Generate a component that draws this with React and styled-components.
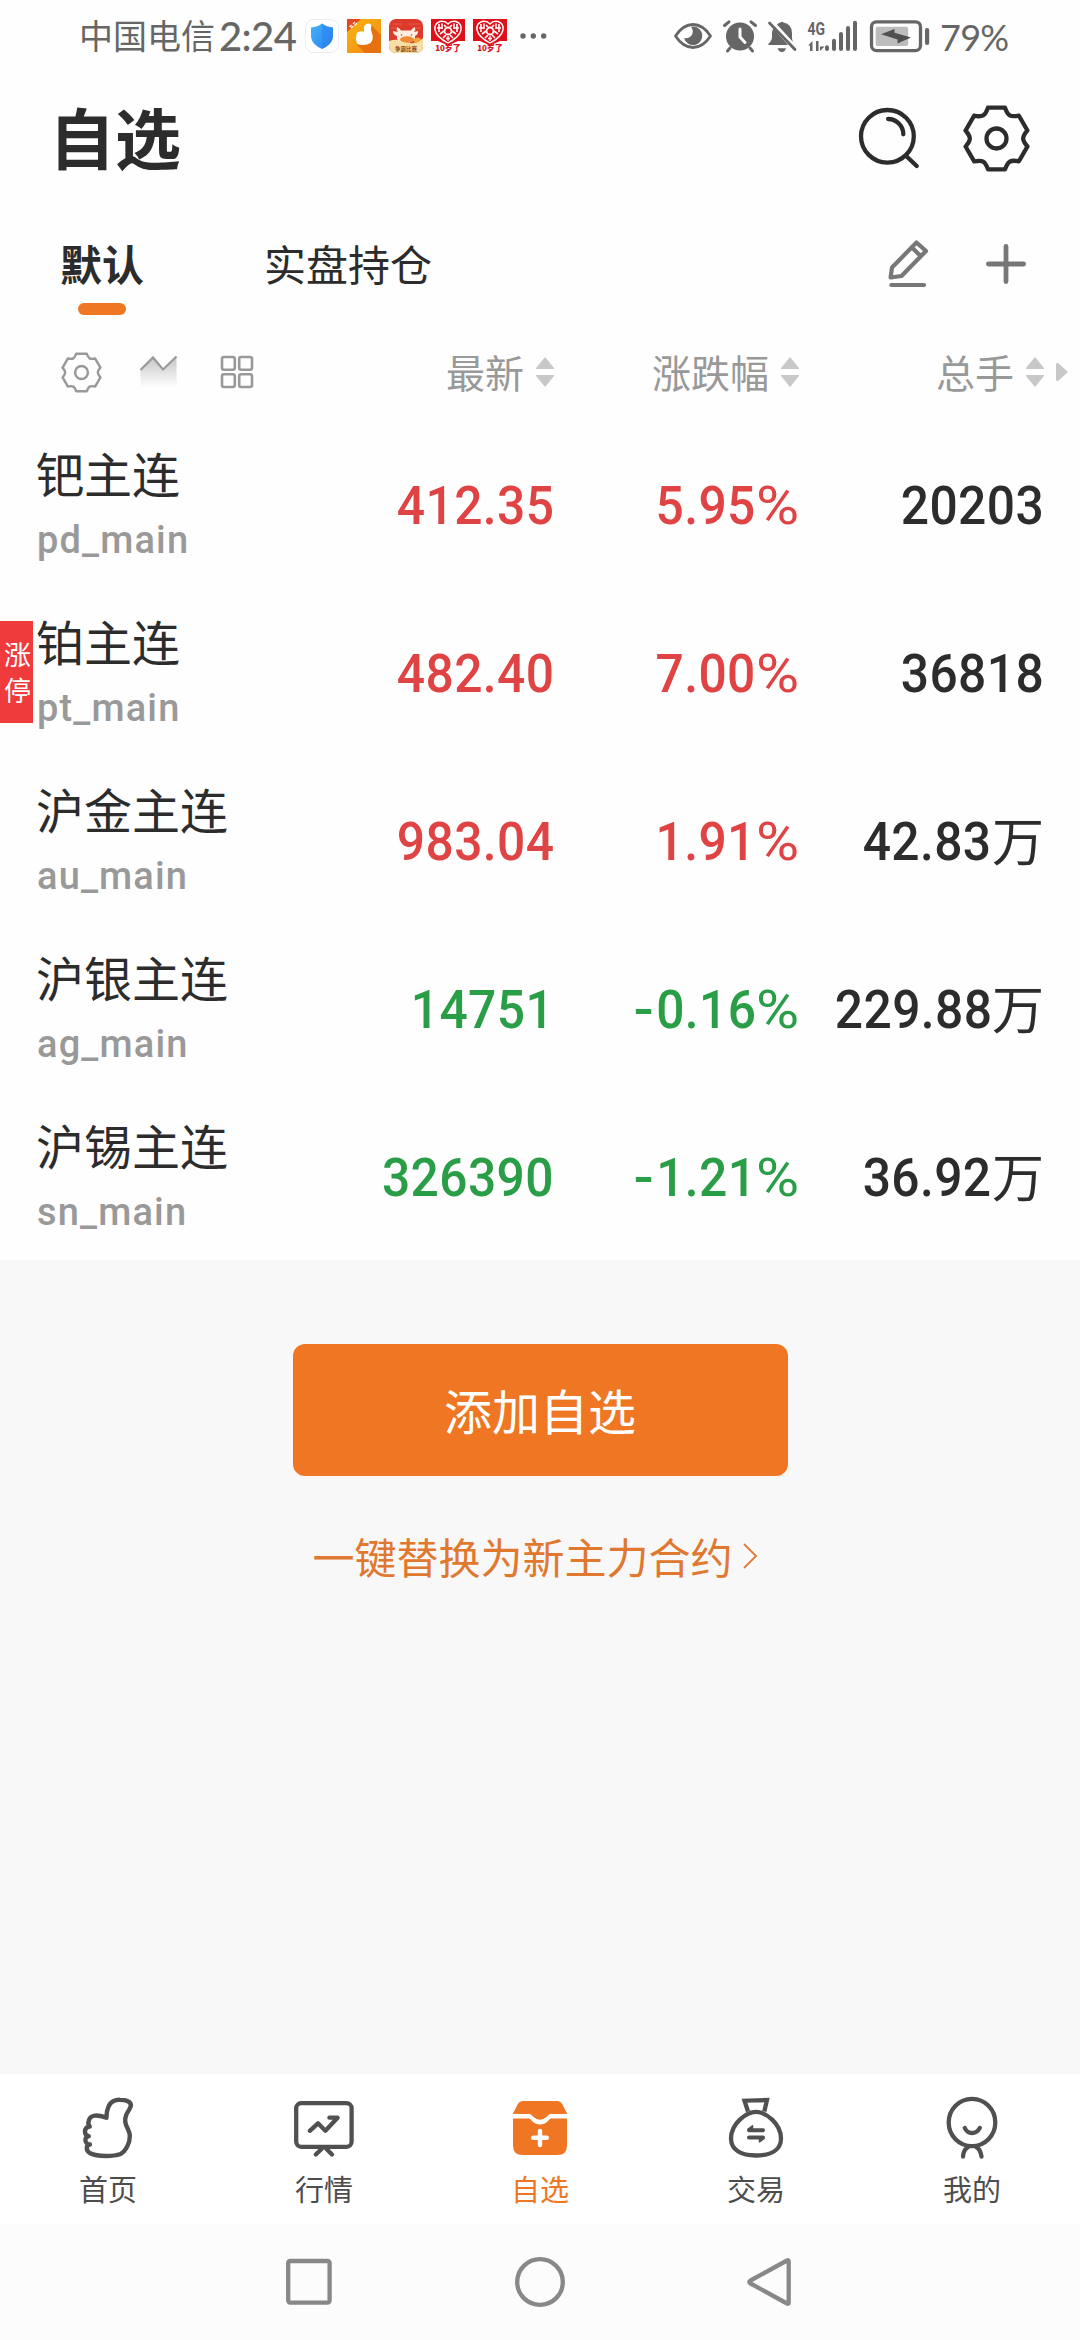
import React from 'react'
import styled, { createGlobalStyle } from 'styled-components'

const quotes = [
    { name: '钯主连', code: 'pd_main', price: '412.35', change: '5.95', volume: '20203', up: true },
    { name: '铂主连', code: 'pt_main', price: '482.40', change: '7.00', volume: '36818', up: true, limit: true },
    { name: '沪金主连', code: 'au_main', price: '983.04', change: '1.91', volume: '42.83', unit: '万', up: true },
    { name: '沪银主连', code: 'ag_main', price: '14751', change: '-0.16', volume: '229.88', unit: '万' },
    { name: '沪锡主连', code: 'sn_main', price: '326390', change: '-1.21', volume: '36.92', unit: '万' },
]

const tabs = [
    { label: '首页', icon: HomeIcon },
    { label: '行情', icon: MarketIcon },
    { label: '自选', icon: WatchIcon, active: true },
    { label: '交易', icon: TradeIcon },
    { label: '我的', icon: MineIcon },
]

// one tooth of the gear, repeated six times around the centre
function gearPath() {
    const rot = (x, y, k) => {
        const a = (k * Math.PI) / 3
        return `${(x * Math.cos(a) - y * Math.sin(a)).toFixed(2)},${(x * Math.sin(a) + y * Math.cos(a)).toFixed(2)}`
    }
    let d = ''
    for (let k = 0; k < 6; k++) {
        d += `${k === 0 ? 'M' : 'L'}${rot(-8.5, -30.8, k)} L${rot(8.5, -30.8, k)} `
        d += `C${rot(11.5, -22.5, k)} ${rot(13.7, -21.2, k)} ${rot(22.4, -22.8, k)} `
    }
    return d + 'Z'
}

function GearIcon({ size, color, stroke, hole = 10 }) {
    return (
        <svg width={size} height={size} viewBox="-33.5 -33.5 67 67" fill="none" stroke={color} strokeWidth={stroke} strokeLinejoin="round">
            <path d={gearPath()} />
            <circle r={hole} />
        </svg>
    )
}

function HomeIcon() {
    return (
        <svg width="60" height="68" fill="none" stroke="#505050" strokeWidth="4.4" strokeLinejoin="round">
            <path d="M28.4 23.7C28.4 19 29 16 30.5 12.7C31.8 9.5 33.5 8 35.6 7C37.6 6 39.5 5.6 41.8 5.7C45 5.7 47.5 6 49.4 7C52.4 8.3 53.5 10 52.6 12.5C52 14 51.4 15.5 50.5 16.7C48.6 19.3 47.5 21.5 47.3 24.3C47 26.6 47.2 29 48 31C49.8 34.8 51.8 38 51.8 42C51.8 46 51 49.3 49.4 52C47.6 55.5 45.6 58.5 42.5 60C38 61.7 33 62 28 62C22 62 16.5 61.6 12.2 59.3C9.8 58 8.6 55.6 8.8 53.3C9 52 9.8 50.7 12 50.5C9 50.6 7.4 48.2 7.4 46C7.4 44 8.6 42.3 10.8 42.3C8.6 42 7 40.2 7 37.8C7 35 8.6 32.8 11.8 32.5C10.2 31 10 28.6 10.8 26.6C11.6 23.4 13.6 22 17 21.6C21 21.3 25 22.6 28.4 23.7Z" />
        </svg>
    )
}

function MarketIcon() {
    return (
        <svg width="60" height="68" fill="none" stroke="#505050" strokeWidth="4.3" strokeLinecap="round" strokeLinejoin="round">
            <rect x="2.2" y="9.2" width="55.4" height="43.6" rx="5" />
            <path d="M15.8 36.8L24 29.3L31.4 36.8L43.6 23.7H35.4" />
            <path d="M28 54.5L21.8 60.5M32 54.5L38 60.5" />
        </svg>
    )
}

function WatchIcon() {
    return (
        <svg width="60" height="68" fill="#ef7622">
            <path d="M13 7H47Q50.5 7 52.5 10.5L57.2 20H42C39.5 20 38.5 20.500 37 22.500Q34 25.700 30 25.700T23 22.500C21.500 20.500 20.500 20 18 20H2.800L7.500 10.500Q9.500 7 13 7Z" />
            <path d="M3 24.600H18C20 24.600 20.500 25 21.500 26.500Q25 30.500 30 30.500T38.500 26.500C39.500 25 40 24.600 42 24.600H57V51.500Q57 61 47.500 61H12.500Q3 61 3 51.500Z" />
            <path d="M23.200 43.800H36.800M30 37V51" stroke="#fff" strokeWidth="4.400" strokeLinecap="round" />
        </svg>
    )
}

function TradeIcon() {
    return (
        <svg width="60" height="68" fill="none" stroke="#505050" strokeWidth="4.3">
            <path d="M22 17.500L18.500 6.700L41 6L38.300 17.500" />
            <path d="M30 17.800C39 17.800 55 29 55 44.500C55 56 45 61.500 30 61.500S5 56 5 44.500C5 29 21 17.800 30 17.800Z" />
            <path d="M23 36.200H37M23 43.400H37" strokeLinecap="round" strokeWidth="4" />
            <path d="M22.200 35L26.500 31.800V36ZM37.800 44.600L33.500 47.800V43.400Z" fill="#505050" strokeWidth="1.500" strokeLinejoin="round" />
        </svg>
    )
}

function MineIcon() {
    return (
        <svg width="60" height="68" fill="none" stroke="#505050" strokeWidth="4.3" strokeLinecap="round">
            <ellipse cx="30" cy="28.500" rx="23.300" ry="23.600" />
            <path d="M22.800 34Q25 39 30 39T37.800 34" />
            <path d="M21 62.500Q21.500 55 27 52.500M39.500 62.500Q38.500 55 33.500 52.500" />
        </svg>
    )
}

function SortArrows() {
    return (
        <svg width="18" height="32" fill="#c8c8c8">
            <path d="M9 1L18 12V13H0V12ZM0 19H18V20L9 31L0 20Z" />
        </svg>
    )
}

function ShieldApp() {
    return (
        <svg width="34" height="34">
            <defs>
                <linearGradient id="shield" x1="0" y1="0" x2="1" y2="1">
                    <stop offset="0" stopColor="#43b5fb" />
                    <stop offset="1" stopColor="#2b7df0" />
                </linearGradient>
            </defs>
            <rect x="0.5" y="0.5" width="33" height="33" rx="8" fill="#fff" stroke="#ececec" />
            <path d="M17 4.500Q21 8 28 8.500V18Q27 25.500 17 30Q7 25.500 6 18V8.500Q13 8 17 4.500Z" fill="url(#shield)" />
            <path d="M17 4.500Q21 8 28 8.500V18Q27 25.500 17 30Z" fill="#2b83ef" opacity="0.55" />
        </svg>
    )
}

function ThumbApp() {
    return (
        <svg width="34" height="34">
            <defs>
                <linearGradient id="thumb" x1="0" y1="0" x2="1" y2="1">
                    <stop offset="0" stopColor="#fbb40c" />
                    <stop offset="1" stopColor="#f08a1a" />
                </linearGradient>
            </defs>
            <rect width="34" height="34" fill="url(#thumb)" />
            <path d="M24 6L34 16V34H18L10 26Z" fill="#e5710f" />
            <path d="M0 0H14L0 13Z" fill="#e8461e" />
            <path d="M2.500 8L4.500 6M4 9L6 7M6 5L8 3M7.500 6.500L10 4" stroke="#fff" strokeWidth="1.200" />
            <path d="M17 12.500Q16 5 21 4.500Q25.500 4.500 24 9Q23.500 11 25 14Q27 20 23.500 24Q20 26.500 14 26Q9.500 25.500 9.500 22.500Q8 20.500 9.200 18Q9 13 12.500 12.500Z" fill="#fff" />
        </svg>
    )
}

function BullApp() {
    return (
        <svg width="34" height="34">
            <defs>
                <clipPath id="bullClip"><rect width="34" height="34" rx="7" /></clipPath>
            </defs>
            <g clipPath="url(#bullClip)">
                <rect width="34" height="34" fill="#dd3a2c" />
                <path d="M4 5H13M20 5H31M2 9H8M27 9H32" stroke="#e5503f" strokeWidth="1.500" />
                <path d="M0 22Q8 19 17 23T34 19V34H0Z" fill="#f6dfa4" />
                <path d="M9 13Q7 11 8 8Q11 9 12 11.500H22Q23 9 26 8Q27 11 25 13L29 12Q29 16 26 17V20Q23 24 17 24T8 20V17Q4 16 4 12Z" fill="#fdeee0" />
                <ellipse cx="18" cy="20.500" rx="7" ry="3.200" fill="#f08a35" />
                <path d="M12.500 15.500V16.500M22.500 15.500V16.500" stroke="#6b2a14" strokeWidth="1.300" />
                <path d="M25 20Q29 17 32 20Q30 24 25 24Z" fill="#f4a23c" />
                <text x="6" y="31.500" fontSize="5.500" fontWeight="700" fill="#8e4318">争霸比赛</text>
            </g>
        </svg>
    )
}

function HeartApp() {
    return (
        <svg width="34" height="34">
            <path d="M0 0H34V22H27L17 26.500L7 22H0Z" fill="#e0101a" />
            <path d="M17 5Q20 1.500 25 2.500Q31 4.500 30 11Q28.500 18 17 24Q5.500 18 4 11Q3 4.500 9 2.500Q14 1.500 17 5Z" fill="none" stroke="#fff" strokeWidth="1.400" />
            <path d="M8 5V13M11 4.500V10M6 9H11M26 5V13M23 4.500V10M28 9H23M9 15L13 12M25 15L21 12M13 6L15 8M21 6L19 8M12 19L15 16M22 19L19 16" stroke="#fff" strokeWidth="1.600" fill="none" />
            <circle cx="17" cy="12" r="3.500" fill="none" stroke="#fff" strokeWidth="1.800" />
            <path d="M17 17V22M15 19.500H19" stroke="#fff" strokeWidth="1.300" />
            <text x="17" y="32.300" textAnchor="middle" fontSize="8" fontWeight="900" fill="#d8101a">10岁了</text>
        </svg>
    )
}

function StatusIcons() {
    return (
        <svg width="260" height="36" viewBox="670 18 260 36" fill="#666">
            {/* eye */}
            <path d="M675.500 36Q683 24.500 693 24.500T710.500 36Q703 47.500 693 47.500T675.500 36Z" fill="none" stroke="#666" strokeWidth="2.800" strokeLinejoin="round" />
            <path d="M693 26.500A9.300 9.300 0 1 1 684 38A7 7 0 0 0 692.500 33.500A7 7 0 0 0 691 27Z" />
            {/* alarm */}
            <circle cx="740" cy="36.500" r="14" />
            <path d="M730 48L727.500 51M750 48L752.500 51M724.500 25.500L729 21.800M755.500 25.500L751 21.800" stroke="#666" strokeWidth="3" strokeLinecap="round" />
            <path d="M740 29V37L745 42.500" stroke="#fff" strokeWidth="3" strokeLinecap="round" fill="none" />
            {/* muted bell */}
            <path d="M773.500 28.500L788 45H768.500V43.500Q772 41 772 36.500V32.500Q772.300 30 773.500 28.500ZM777 24.500Q779 22.800 780.500 22.600Q782 20.700 783.500 22.600Q792 24.500 792 33V37.500Q792 40 793 42ZM777.500 48.300H786Q785 52 782 52Q778.800 52 777.500 48.300Z" />
            <path d="M769.500 23L795 49.500" stroke="#666" strokeWidth="2.800" strokeLinecap="round" />
            {/* mobile signal */}
            <text x="807.500" y="35" fontSize="18.500" fontWeight="700" fontFamily="Roboto" textLength="17.500" lengthAdjust="spacingAndGlyphs">4G</text>
            <path d="M812.500 41V51H810V45.500H808ZM816 41H818.500V51H816ZM820 41V51L824.500 46.500H820Z" />
            <path d="M827 47.200V49M834 40.700V49M841 34V49M848 28V49M855 22.700V49" stroke="#666" strokeWidth="4" strokeLinecap="round" />
            {/* battery */}
            <rect x="871.500" y="21.800" width="49" height="28.800" rx="5" fill="none" stroke="#666" strokeWidth="3.300" />
            <rect x="875.700" y="26.700" width="32.500" height="19.300" rx="2" fill="#bdbdbd" />
            <path d="M881 34.300L894.500 29V32.700L911 37.500L897.500 43.500V39.500Z" fill="#505050" />
            <rect x="925" y="28" width="4.200" height="17" rx="2" />
        </svg>
    )
}

function QuoteRow({ item }) {
    const trend = item.up ? '#e04343' : '#2a9d47'
    const negative = item.change.startsWith('-')

    return (
        <Row>
            {item.limit && <LimitBadge>涨<br />停</LimitBadge>}
            <div>
                <Name>{item.name}</Name>
                <Code>{item.code}</Code>
            </div>
            <Figure $color={trend}><Digits>{item.price}</Digits></Figure>
            <Figure $color={trend}>
                <Digits>{negative && <Minus>-</Minus>}{item.change.replace('-', '')}</Digits>
                <Percent>%</Percent>
            </Figure>
            <Figure $color="#2c2c2c">
                <Digits>{item.volume}</Digits>
                {item.unit && <Unit>{item.unit}</Unit>}
            </Figure>
        </Row>
    )
}

function App() {
    return (
        <Screen>
            <GlobalStyle />
            <StatusBar>
                <Carrier>中国电信</Carrier>
                <Clock>2:24</Clock>
                <AppIcons>
                    <ShieldApp />
                    <ThumbApp />
                    <BullApp />
                    <HeartApp />
                    <HeartApp />
                    <svg width="32" height="34" fill="#666">
                        <circle cx="8" cy="17" r="2.700" />
                        <circle cx="18.300" cy="17" r="2.700" />
                        <circle cx="28.700" cy="17" r="2.700" />
                    </svg>
                </AppIcons>
                <StatusRight>
                    <StatusIcons />
                    <Battery>79%</Battery>
                </StatusRight>
            </StatusBar>

            <TitleBar>
                <Title>自选</Title>
                <TitleActions>
                    <svg width="64" height="64" fill="none" stroke="#2c2c2c" strokeWidth="4.300" strokeLinecap="round">
                        <ellipse cx="30.400" cy="30.300" rx="26.400" ry="26.300" />
                        <path d="M31.100 13A15.300 15.300 0 0 1 46.300 28.300M49.400 50.300L59.700 60" />
                    </svg>
                    <GearIcon size={67} color="#2c2c2c" stroke={4.3} />
                </TitleActions>
            </TitleBar>

            <GroupBar>
                <Group $active>默认</Group>
                <Group>实盘持仓</Group>
                <GroupActions>
                    <svg width="42" height="50" fill="none" stroke="#777" strokeWidth="4.200" strokeLinecap="round" strokeLinejoin="round">
                        <path d="M3.600 38.500L5 28.500L29.500 3.500L39 12L14.500 37Z M25 8.500L33.500 17" />
                        <path d="M4.300 46H37" />
                    </svg>
                    <svg width="42" height="42" stroke="#777" strokeWidth="4.800" strokeLinecap="round">
                        <path d="M3.400 21H38.600M21 3.400V38.600" />
                    </svg>
                </GroupActions>
            </GroupBar>

            <ColumnBar>
                <ViewModes>
                    <GearIcon size={41} color="#999" stroke={4} hole={10.5} />
                    <svg width="38" height="34">
                        <defs>
                            <linearGradient id="area" x1="0" y1="0" x2="0" y2="1">
                                <stop offset="0" stopColor="#c4c4c4" />
                                <stop offset="1" stopColor="#ffffff" />
                            </linearGradient>
                        </defs>
                        <path d="M0.500 14L13 2L23 14L36.500 1V33H0.500Z" fill="url(#area)" />
                        <path d="M0.500 15L13 2.500L23 14.500L36.500 1.500" fill="none" stroke="#999" strokeWidth="2.200" />
                    </svg>
                    <svg width="34" height="34" fill="none" stroke="#999" strokeWidth="2.600">
                        <rect x="2" y="2" width="12.800" height="12.800" rx="2" />
                        <rect x="19.200" y="2" width="12.800" height="12.800" rx="2" />
                        <rect x="2" y="19.200" width="12.800" height="12.800" rx="2" />
                        <rect x="19.200" y="19.200" width="12.800" height="12.800" rx="2" />
                    </svg>
                </ViewModes>
                <Column><span>最新</span><SortArrows /></Column>
                <Column><span>涨跌幅</span><SortArrows /></Column>
                <Column><span>总手</span><SortArrows /></Column>
                <svg width="12" height="20" fill="#c8c8c8">
                    <path d="M0 2.500Q0 0.500 2 1L12 10L2 19Q0 19.500 0 17.500Z" />
                </svg>
            </ColumnBar>

            {quotes.map(q => <QuoteRow key={q.code} item={q} />)}

            <Footer>
                <AddButton>添加自选</AddButton>
                <SwapLink>
                    一键替换为新主力合约
                    <svg width="16" height="28" fill="none" stroke="#e08040" strokeWidth="2">
                        <path d="M2 2L14 14L2 26" />
                    </svg>
                </SwapLink>
            </Footer>

            <TabBar>
                {tabs.map(({ label, icon: Icon, active }) => (
                    <Tab key={label} $active={active}>
                        <Icon />
                        {label}
                    </Tab>
                ))}
            </TabBar>

            <NavBar>
                <svg width="52" height="52" fill="none" stroke="#888" strokeWidth="4.300">
                    <rect x="5.200" y="5" width="41.400" height="41.600" rx="2" />
                </svg>
                <svg width="52" height="52" fill="none" stroke="#888" strokeWidth="4.300">
                    <ellipse cx="26" cy="26" rx="22.800" ry="22.800" />
                </svg>
                <svg width="52" height="52" fill="none" stroke="#888" strokeWidth="4.300" strokeLinejoin="round">
                    <path d="M42 4.500Q43.700 3.500 43.700 5.500V46.500Q43.700 48.500 42 47.500L5.500 27.500Q3 26 5.500 24.500Z" />
                </svg>
            </NavBar>
        </Screen>
    )
}

export default App

const GlobalStyle = createGlobalStyle`
body{
    margin:0;
    background:#fff;
}
*{
    box-sizing:border-box;
}
svg{
    display:block;
    flex-shrink:0;
}
`
const Screen = styled.div`
width:1080px;
height:2340px;
display:flex;
flex-direction:column;
overflow:hidden;
background:#fefefe;
color:#2c2c2c;
font-family:"Noto Sans CJK SC", sans-serif;
`
const StatusBar = styled.div`
height:72px;
padding:0 73px 0 79px;
display:flex;
align-items:center;
color:#666;
`
const Carrier = styled.span`
width:140px;
font-size:34px;
line-height:68px;
margin-bottom:2px;
white-space:nowrap;
`
const Clock = styled.span`
width:86px;
font-family:Lato, sans-serif;
font-size:40px;
line-height:72px;
font-weight:500;
letter-spacing:-0.600px;
white-space:nowrap;
`
const AppIcons = styled.div`
display:flex;
gap:8px;
`
const StatusRight = styled.div`
display:flex;
align-items:center;
margin-left:auto;
gap:10px;
`
const Battery = styled.span`
font-family:Lato, sans-serif;
font-size:36px;
line-height:72px;
margin-top:2px;
width:67px;
letter-spacing:-0.700px;
white-space:nowrap;
`
const TitleBar = styled.div`
height:138px;
padding:0 50px 6px 49px;
display:flex;
align-items:center;
justify-content:space-between;
`
const Title = styled.h1`
margin:0 0 6px;
font-size:66px;
line-height:90px;
font-weight:700;
`
const TitleActions = styled.div`
display:flex;
align-items:center;
gap:42px;
`
const GroupBar = styled.div`
height:120px;
padding:23px 53px 0 60px;
display:flex;
align-items:flex-start;
`
const Group = styled.div`
margin-right:120px;
font-size:42px;
line-height:60px;
font-weight:${props => props.$active ? 700 : 400};
&::after{
    content:'';
    display:${props => props.$active ? 'block' : 'none'};
    width:48px;
    height:12px;
    margin:10px auto 0;
    border-radius:6px;
    background:#ef7622;
}
`
const GroupActions = styled.div`
display:flex;
align-items:center;
gap:56px;
margin-left:auto;
height:62px;
`
const ColumnBar = styled.div`
height:90px;
padding:0 12px 6px 61px;
display:grid;
grid-template-columns:1fr 190px 245px 245px 24px;
align-items:center;
& > svg{
    margin-left:12px;
}
`
const ViewModes = styled.div`
display:flex;
align-items:center;
& > svg{
    margin-right:38px;
}
& > svg + svg{
    margin-right:42px;
}
`
const Column = styled.div`
display:flex;
align-items:center;
justify-content:flex-end;
gap:12px;
color:#999;
font-size:39px;
line-height:56px;
span{
    margin-bottom:3px;
}
`
const Row = styled.div`
position:relative;
height:168px;
padding:0 36px 0 36px;
display:grid;
grid-template-columns:1fr 245px 245px 245px;
`
const LimitBadge = styled.div`
position:absolute;
left:0;
top:33px;
width:33px;
height:102px;
padding:15px 0 0 4px;
background:#ef3b3b;
color:#fff;
font-size:27px;
line-height:36px;
`
const Name = styled.div`
margin-top:22px;
font-size:48px;
line-height:60px;
white-space:nowrap;
`
const Code = styled.div`
margin:16px 0 0 1px;
font-family:Roboto, sans-serif;
font-size:38px;
line-height:44px;
letter-spacing:1.150px;
font-weight:500;
color:#999;
`
const Figure = styled.div`
display:flex;
justify-content:flex-end;
font-family:Roboto, sans-serif;
font-size:53.500px;
line-height:172px;
height:168px;
font-weight:500;
white-space:nowrap;
color:${props => props.$color};
`
const Digits = styled.span`
letter-spacing:0.400px;
transform:scaleX(0.93);
transform-origin:right;
`
const Minus = styled.span`
display:inline-block;
margin-right:4px;
transform:scaleX(1.2);
`
const Percent = styled.span`
margin-left:4px;
font-weight:400;
transform:scaleX(1.1);
transform-origin:right;
`
const Unit = styled.span`
font-family:"Noto Sans CJK SC", sans-serif;
font-size:52px;
line-height:165px;
font-weight:400;
`
const Footer = styled.div`
height:814px;
padding-top:84px;
display:flex;
flex-direction:column;
align-items:center;
background:#f8f8f8;
`
const AddButton = styled.button`
width:495px;
height:132px;
padding:0 0 3px;
border:0;
border-radius:12px;
background:#ef7622;
color:#fff;
font-family:inherit;
font-size:48px;
`
const SwapLink = styled.a`
display:flex;
align-items:center;
gap:9px;
margin:48px 10px 0 0;
color:#e07830;
font-size:42px;
line-height:64px;
`
const TabBar = styled.div`
height:150px;
padding-top:20px;
display:grid;
grid-template-columns:repeat(5, 216px);
background:#fff;
`
const Tab = styled.div`
display:flex;
flex-direction:column;
align-items:center;
font-size:29px;
line-height:52px;
color:${props => props.$active ? '#ef7622' : '#4d4d4d'};
`
const NavBar = styled.div`
height:116px;
padding:0 283px;
display:flex;
align-items:center;
justify-content:space-between;
background:#fcfcfc;
`
